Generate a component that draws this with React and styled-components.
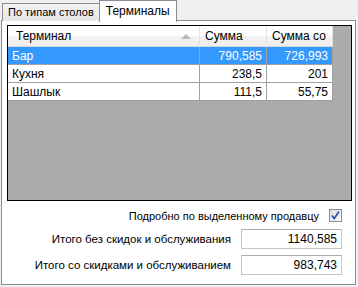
import React from 'react'
import styled, { createGlobalStyle } from 'styled-components'

const Global = createGlobalStyle`
  body {
    margin: 0;
    background: #f0f0f0;
    font-family: "Liberation Sans", Arial, sans-serif;
    font-size: 11px;
    color: #000;
  }
`

const Window = styled.div`
  width: 358px;
  height: 287px;
  box-sizing: border-box;
  padding-left: 1px;
  background: #f0f0f0;
`

const TabStrip = styled.div`
  display: flex;
  align-items: flex-end;
  height: 21px;
  padding-left: 1px;
  position: relative;
  z-index: 1;
`

const Tab = styled.div`
  box-sizing: border-box;
  height: ${p => (p.$active ? 22 : 18)}px;
  margin-bottom: ${p => (p.$active ? -1 : 0)}px;
  padding: ${p => (p.$active ? '3px 6px 0' : '2px 5px 0')};
  border: 1px solid #898c95;
  border-bottom: none;
  margin-left: ${p => (p.$active ? -1 : 0)}px;
  background: ${p => (p.$active ? '#fff' : 'linear-gradient(#f3f3f3, #e6e6e6)')};
  font-size: ${p => (p.$active ? 12 : 11)}px;
  white-space: nowrap;
`

const Page = styled.div`
  box-sizing: border-box;
  width: 355px;
  height: 265px;
  margin-top: -1px;
  border: 1px solid #898c95;
  background: #fff;
  padding: 4px 3px 0 5px;
`

const Grid = styled.div`
  box-sizing: border-box;
  width: 345px;
  height: 176px;
  border: 1px solid #000;
  background: #ababab;
`

const Row = styled.div`
  display: grid;
  grid-template-columns: 192px 67px 66px;
  height: ${p => (p.$header ? 21 : 18)}px;
`

const HeadCell = styled.div`
  position: relative;
  display: flex;
  align-items: center;
  padding-left: ${p => (p.$first ? 8 : 5)}px;
  border-right: 1px solid #e3e3e3;
  border-bottom: 1px solid #d5d5d5;
  background: linear-gradient(#ffffff 0%, #ffffff 45%, #f2f2f3 55%, #eeeeef 100%);
  font-size: 12px;
`

const SortArrow = styled.div`
  position: absolute;
  right: 8px;
  top: 8px;
  width: 0;
  height: 0;
  border-left: 5px solid transparent;
  border-right: 5px solid transparent;
  border-bottom: 5px solid #b8b8b8;
`

const Cell = styled.div`
  display: flex;
  align-items: center;
  justify-content: ${p => (p.$num ? 'flex-end' : 'flex-start')};
  padding: 0 4px 0 4px;
  border-right: 1px solid #a0a0a0;
  border-bottom: 1px solid #a0a0a0;
  background: ${p => (p.$sel ? '#3399ff' : '#fff')};
  color: ${p => (p.$sel ? '#fff' : '#000')};
  font-size: 12px;
`

const Footer = styled.div`
  display: flex;
  flex-direction: column;
  align-items: flex-end;
  padding-right: 10px;
  margin-top: 7px;
  gap: 6px;
`

const CheckRow = styled.label`
  display: flex;
  align-items: center;
  gap: 10px;
  font-size: 11px;
  height: 15px;
`

const CheckBox = styled.span`
  box-sizing: border-box;
  width: 13px;
  height: 13px;
  border: 1px solid #8f8f8f;
  background: linear-gradient(135deg, #dcdcdc, #fcfcfc);
  display: flex;
  align-items: center;
  justify-content: center;
`

const FieldRow = styled.div`
  display: flex;
  align-items: center;
  gap: 10px;
  font-size: 11.5px;
`

const Field = styled.div`
  box-sizing: border-box;
  width: 101px;
  height: 20px;
  border: 1px solid #c5c5c5;
  border-top-color: #abadb3;
  padding: 0 4px;
  display: flex;
  align-items: center;
  justify-content: flex-end;
  background: #fff;
  font-size: 12px;
`

const rows = [
  ['Бар', '790,585', '726,993'],
  ['Кухня', '238,5', '201'],
  ['Шашлык', '111,5', '55,75'],
]

export default function App() {
  return (
    <Window>
      <Global />
      <TabStrip>
        <Tab>По типам столов</Tab>
        <Tab $active>Терминалы</Tab>
      </TabStrip>
      <Page>
        <Grid>
          <Row $header>
            <HeadCell $first>Терминал<SortArrow /></HeadCell>
            <HeadCell>Сумма</HeadCell>
            <HeadCell>Сумма со</HeadCell>
          </Row>
          {rows.map((r, i) => (
            <Row key={i}>
              <Cell $sel={i === 0}>{r[0]}</Cell>
              <Cell $sel={i === 0} $num>{r[1]}</Cell>
              <Cell $sel={i === 0} $num>{r[2]}</Cell>
            </Row>
          ))}
        </Grid>
        <Footer>
          <CheckRow>
            Подробно по выделенному продавцу
            <CheckBox>
              <svg width="11" height="11" viewBox="0 0 11 11">
                <path d="M2 5.5 L4.2 8.5 L9 1.5" fill="none" stroke="#2a4bb0" strokeWidth="1.6" />
              </svg>
            </CheckBox>
          </CheckRow>
          <FieldRow>
            Итого без скидок и обслуживания
            <Field>1140,585</Field>
          </FieldRow>
          <FieldRow>
            Итого со скидками и обслуживанием
            <Field>983,743</Field>
          </FieldRow>
        </Footer>
      </Page>
    </Window>
  )
}
